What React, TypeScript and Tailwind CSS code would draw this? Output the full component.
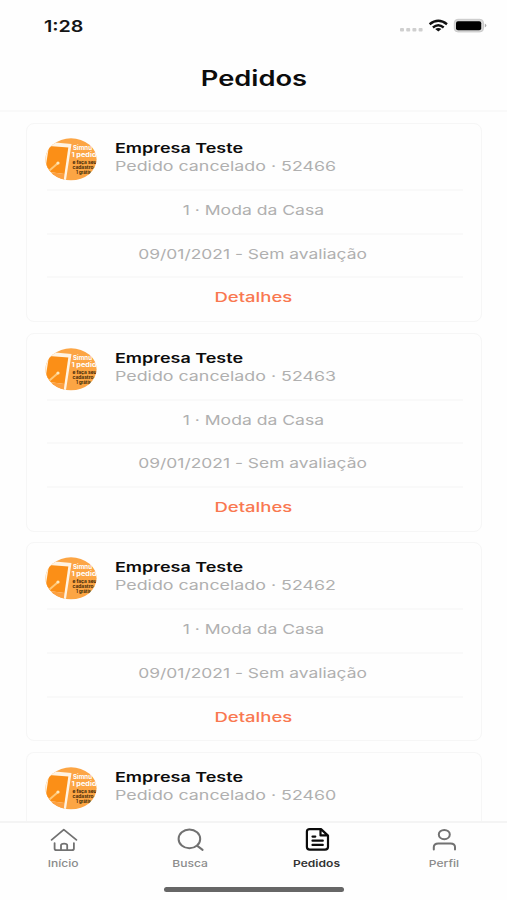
import React from "react";

const orders = ["52466", "52463", "52462"];
const lastOrder = "52460";

function StatusBar() {
  return (
    <div className="flex h-[52px] items-center justify-between pl-[44px] pr-[20px]">
      <span className="origin-left scale-x-[1.23] text-[16px] font-semibold leading-none text-[#161616]">1:28</span>
      <svg width="88" height="20" viewBox="399 16 88 20">
        <g fill="#cfcfcf">
          <rect x="400" y="28" width="4" height="3.6" rx="1" />
          <rect x="406.2" y="28" width="4" height="3.6" rx="1" />
          <rect x="412.4" y="28" width="4" height="3.6" rx="1" />
          <rect x="418.6" y="28" width="4" height="3.6" rx="1" />
        </g>
        <g fill="none" stroke="#111" strokeWidth="2.4">
          <path d="M429.6 24.2Q438.3 17.3 447 24.2" />
          <path d="M432.9 27.5Q438.3 23 443.7 27.5" />
        </g>
        <path d="M435.2 29Q438.3 26.8 441.4 29L438.3 31.6Z" fill="#111" />
        <rect x="454.3" y="19.3" width="29.2" height="12.6" rx="3.6" fill="#d8d8d8" stroke="#cacaca" strokeWidth="1" />
        <rect x="456" y="21.2" width="25.2" height="9" rx="2" fill="#000" />
        <path d="M484.8 23.6Q486.4 24.4 486.4 25.6Q486.4 26.8 484.8 27.6Z" fill="#aaa" />
      </svg>
    </div>
  );
}

function Avatar() {
  return (
    <svg width="52" height="43" viewBox="0 0 52 43" className="shrink-0">
      <defs>
        <clipPath id="avatar-clip">
          <ellipse cx="26" cy="21.3" rx="25.6" ry="21" />
        </clipPath>
      </defs>
      <g clipPath="url(#avatar-clip)">
        <rect width="52" height="43" fill="#fca544" />
        <path d="M0 6L10 4.5L26.5 6L21 42H18L19 37L0 34Z" fill="#fff3e2" />
        <path d="M4 8L23.3 9.5L19.5 36L0 33.5Z" fill="#fb8f17" />
        <path d="M0 33.5L19.5 36L18.6 43H0Z" fill="#fca040" />
        <path d="M5 32L12.5 25.5" stroke="#ffc878" strokeWidth="2" strokeLinecap="round" />
        <circle cx="13" cy="25" r="1.6" fill="#ffe7b8" />
        <g fontFamily="Inter, sans-serif" fontWeight="700">
          <text x="28" y="12.3" fontSize="5.8" fill="#fff" textLength="19" lengthAdjust="spacingAndGlyphs">Simnu</text>
          <text x="26.5" y="19.3" fontSize="5.8" fill="#fff" textLength="25" lengthAdjust="spacingAndGlyphs">1 pedid</text>
          <text x="27.5" y="25.8" fontSize="4.6" fill="#3d2506" textLength="24" lengthAdjust="spacingAndGlyphs">e faça seu</text>
          <text x="27.5" y="31.3" fontSize="4.6" fill="#3d2506" textLength="21" lengthAdjust="spacingAndGlyphs">cadastro</text>
          <text x="31" y="35.6" fontSize="4.2" fill="#3d2506" textLength="15" lengthAdjust="spacingAndGlyphs">1 grátis</text>
        </g>
      </g>
    </svg>
  );
}

function Row({ children }: { children: React.ReactNode }) {
  return (
    <div className="ml-[20px] mr-[18px] flex h-[43.7px] items-center justify-center border-t-2 border-[#f9f9f9] pb-[2px] pr-[4px] text-[13.5px] leading-none text-[#b0b0b0]">
      {children}
    </div>
  );
}

function OrderHeader({ id }: { id: string }) {
  return (
    <div className="flex h-[65px] gap-[18px] pl-[18px] pt-[14px]">
      <Avatar />
      <div className="flex flex-col gap-[4px] pt-[3px]">
        <h2 className="origin-left scale-x-[1.33] whitespace-nowrap text-[13.5px] font-semibold leading-[14px] text-[#0c0c0c]">Empresa Teste</h2>
        <p className="origin-left scale-x-[1.32] whitespace-nowrap text-[13.5px] leading-[14px] text-[#b0b0b0]">Pedido cancelado · {id}</p>
      </div>
    </div>
  );
}

function OrderCard({ id }: { id: string }) {
  return (
    <article className="h-[199px] shrink-0 rounded-[8px] border-[1.5px] border-[#f6f6f6]">
      <OrderHeader id={id} />
      <Row><span className="scale-x-[1.3]">1 · Moda da Casa</span></Row>
      <Row><span className="scale-x-[1.29]">09/01/2021 - Sem avaliação</span></Row>
      <Row><span className="scale-x-[1.37] font-medium text-[#f97850]">Detalhes</span></Row>
    </article>
  );
}

function Tab({ label, active, children }: { label: string; active?: boolean; children: React.ReactNode }) {
  return (
    <button className={`flex flex-1 flex-col items-center gap-[3px] pt-[4px] ${active ? "text-[#0b0b0b]" : "text-[#717171]"}`}>
      <svg width="30" height="28" viewBox="0 0.4 30 28" fill="none" stroke="currentColor" strokeWidth="2" strokeLinecap="round" strokeLinejoin="round">
        {children}
      </svg>
      <span className={`scale-x-[1.27] text-[9.5px] leading-[12px] ${active ? "font-semibold text-[#333]" : "font-medium text-[#8b8b8b]"}`}>{label}</span>
    </button>
  );
}

export default function App() {
  return (
    <div className="flex h-[900px] w-[507px] flex-col overflow-hidden bg-[#fefefe] font-['Inter',sans-serif]">
      <StatusBar />
      <header className="flex h-[60px] shrink-0 items-center justify-center border-b-2 border-[#f9f9f9] pb-[6px]">
        <h1 className="scale-x-[1.3] text-[21px] font-semibold leading-none text-[#0c0c0c]">Pedidos</h1>
      </header>
      <main className="flex min-h-0 flex-1 flex-col gap-[10.6px] pl-[26px] pr-[25px] pt-[11px]">
        {orders.map((id) => <OrderCard key={id} id={id} />)}
        <article className="min-h-0 flex-1 rounded-t-[8px] border-[1.5px] border-b-0 border-[#f6f6f6]">
          <OrderHeader id={lastOrder} />
        </article>
      </main>
      <nav className="flex h-[79px] shrink-0 flex-col border-t-2 border-[#f4f4f4]">
        <div className="flex h-[63px]">
          <Tab label="Início">
            <path d="M3.6 13.3L15.8 3L28.4 13.3M6.6 16.5V21.8Q6.6 23.5 8.6 23.5H23.9Q25.9 23.5 25.9 21.8V16.5M13 23.5V18.6Q13 17 16.1 17Q19.2 17 19.2 18.6V23.5" strokeWidth="1.8" />
          </Tab>
          <Tab label="Busca">
            <ellipse cx="14.4" cy="12.3" rx="10.8" ry="9.4" />
            <path d="M22.3 19.3L27.6 23.3" />
          </Tab>
          <Tab label="Pedidos" active>
            <path d="M19 2.5H7.8Q4.9 2.5 4.9 5V20.5Q4.9 23 7.8 23H23Q26 23 26 20.5V9ZM18.5 3V8.8H25.5M10.5 10H13.3M10.5 14.1H20.8M10.5 18.3H20.8" strokeWidth="2.2" />
          </Tab>
          <Tab label="Perfil">
            <ellipse cx="15.3" cy="8" rx="5.5" ry="4.6" />
            <path d="M4.8 23V20.5Q4.8 16.8 9.3 16.8H21.5Q26 16.8 26 20.5V23" />
          </Tab>
        </div>
        <div className="ml-[164px] mt-[1px] h-[5px] w-[180px] rounded-full bg-[#666]" />
      </nav>
    </div>
  );
}
